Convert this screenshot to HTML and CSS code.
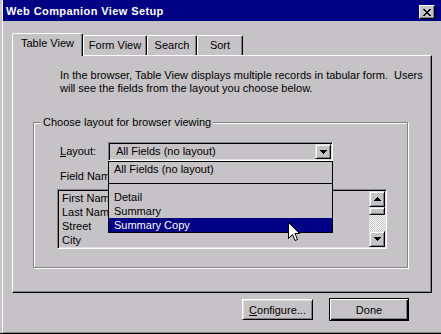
FILE: index.html
```html
<!DOCTYPE html>
<html lang="en">
<head>
    <meta charset="UTF-8">
    <title>Web Companion View Setup</title>
    <link rel="stylesheet" href="styles.css">
</head>
<body>

    <div class="window">
        <div class="frame">
            <div class="titlebar">
                <span class="title">Web Companion View Setup</span>
                <span class="close-btn">
                    <svg width="8" height="7" viewBox="0 0 8 7" shape-rendering="crispEdges">
                        <path d="M0 0h2v1H0z M6 0h2v1H6z M1 1h2v1H1z M5 1h2v1H5z M2 2h4v1H2z M3 3h2v1H3z M2 4h4v1H2z M1 5h2v1H1z M5 5h2v1H5z M0 6h2v1H0z M6 6h2v1H6z" fill="#000"/>
                    </svg>
                </span>
            </div>

            <div class="tabs">
                <div class="tab active tab-table">Table View</div>
                <div class="tab tab-form">Form View</div>
                <div class="tab tab-search">Search</div>
                <div class="tab tab-sort">Sort</div>
            </div>

            <div class="panel">
                <p class="intro">In the browser, Table View displays multiple records in tabular form.&nbsp; Users<br>will see the fields from the layout you choose below.</p>

                <fieldset class="group">
                    <legend>Choose layout for browser viewing</legend>

                    <div class="layout-row">
                        <label class="field-label"><u>L</u>ayout:</label>
                        <div class="combo">
                            <span class="combo-value">All Fields (no layout)</span>
                            <span class="combo-btn">
                                <svg width="7" height="4" viewBox="0 0 7 4" shape-rendering="crispEdges">
                                    <path d="M0 0h7v1H0z M1 1h5v1H1z M2 2h3v1H2z M3 3h1v1H3z" fill="#000"/>
                                </svg>
                            </span>
                            <ul class="droplist">
                                <li>All Fields (no layout)</li>
                                <li class="sep"></li>
                                <li>Detail</li>
                                <li>Summary</li>
                                <li class="selected">Summary Copy</li>
                            </ul>
                        </div>
                    </div>

                    <div class="field-label names-label">Field Names:</div>

                    <div class="listbox">
                        <ul class="items">
                            <li>First Name</li>
                            <li>Last Name</li>
                            <li>Street</li>
                            <li>City</li>
                        </ul>
                        <div class="scrollbar">
                            <span class="sb-btn">
                                <svg width="7" height="4" viewBox="0 0 7 4" shape-rendering="crispEdges">
                                    <path d="M3 0h1v1H3z M2 1h3v1H2z M1 2h5v1H1z M0 3h7v1H0z" fill="#000"/>
                                </svg>
                            </span>
                            <span class="sb-thumb"></span>
                            <span class="sb-track"></span>
                            <span class="sb-btn">
                                <svg width="7" height="4" viewBox="0 0 7 4" shape-rendering="crispEdges">
                                    <path d="M0 0h7v1H0z M1 1h5v1H1z M2 2h3v1H2z M3 3h1v1H3z" fill="#000"/>
                                </svg>
                            </span>
                        </div>
                    </div>
                </fieldset>
            </div>

            <div class="buttons">
                <button type="button" class="btn btn-configure"><u>C</u>onfigure...</button>
                <button type="button" class="btn btn-done">Done</button>
            </div>
        </div>

        <!-- mouse pointer over the open list -->
        <svg class="cursor" width="12" height="20" viewBox="0 0 12 20">
            <path d="M0.5 0.5V16.5L4.5 12.5L7 18.5L9.5 17.5L7 11.5H11.5Z" fill="#fff" stroke="#000" stroke-width="1"/>
        </svg>
    </div>

</body>
</html>
```

FILE: styles.css
```css
* {
    box-sizing: border-box;
}
body {
    margin: 0;
    background-color: #c6c3c6;
    font-family: "Liberation Sans", Arial, sans-serif;
    font-size: 11px;
    color: #000;
}
.window {
    position: relative;
    width: 441px;
    height: 334px;
    padding-left: 2px;
    background-color: #c6c3c6;
    border-bottom: 1px solid #000;
    overflow: hidden;
}
.frame {
    height: 333px;
    border-left: 1px solid #fff;
    border-bottom: 1px solid #848284;
}

/* title bar */
.titlebar {
    display: flex;
    justify-content: space-between;
    align-items: flex-start;
    height: 21px;
    padding: 5px 6px 0 3px;
    background-color: #000084;
    color: #fff;
}
.title {
    font-family: "Liberation Sans", Arial, sans-serif;
    font-size: 11px;
    font-weight: 700;
    line-height: 13px;
    letter-spacing: 0.4px;
}
.close-btn {
    display: flex;
    align-items: center;
    justify-content: center;
    width: 16px;
    height: 14px;
    background-color: #c6c3c6;
    border: 1px solid;
    border-color: #fff #000 #000 #fff;
    box-shadow: inset -1px -1px #848284;
}

/* tabs */
.tabs {
    position: relative;
    z-index: 2;
    display: flex;
    align-items: flex-end;
    height: 22px;
    margin: 12px 0 0 9px;
}
.tab {
    height: 20px;
    padding-top: 3px;
    line-height: 13px;
    text-align: center;
    background-color: #c6c3c6;
    border: 1px solid;
    border-bottom: none;
    border-color: #fff #000 transparent #fff;
    border-radius: 2px 2px 0 0;
    box-shadow: inset -1px 0 #848284;
}
.tab.active {
    height: 23px;
    margin-bottom: -1px;
}
.tab-table { width: 71px; }
.tab-form { width: 64px; }
.tab-search { width: 50px; }
.tab-sort { width: 46px; }

.panel {
    position: relative;
    z-index: 1;
    width: 420px;
    height: 238px;
    margin-left: 9px;
    padding-top: 13px;
    border: 1px solid;
    border-color: #fff #000 #000 #fff;
    box-shadow: inset -1px -1px #848284;
}
.intro {
    margin: 0 0 21px 47px;
    line-height: 13px;
}

/* group box */
.group {
    width: 375px;
    margin: 0 0 0 20px;
    padding: 0 0 18px 0;
    border: 1px solid #848284;
    box-shadow: 1px 1px #fff, inset 1px 1px #fff;
    min-inline-size: auto;
}
.group legend {
    margin-left: 7px;
    padding: 0 2px;
    line-height: 13px;
    background-color: #c6c3c6;
}
.field-label {
    line-height: 13px;
}
.layout-row {
    display: flex;
    align-items: center;
    height: 19px;
    margin: 13px 0 0 26px;
}
.layout-row .field-label {
    width: 48px;
}
.combo {
    position: relative;
    display: flex;
    align-items: center;
    justify-content: space-between;
    width: 225px;
    height: 19px;
    padding: 1px;
    border: 1px solid;
    border-color: #848284 #fff #fff #848284;
    box-shadow: inset 1px 1px #000, inset -1px -1px #dfdfdf;
}
.combo-value {
    padding-left: 6px;
    line-height: 15px;
}
.combo-btn,
.sb-btn,
.sb-thumb {
    display: flex;
    align-items: center;
    justify-content: center;
    background-color: #c6c3c6;
    border: 1px solid;
    border-color: #dfdfdf #000 #000 #dfdfdf;
    box-shadow: inset 1px 1px #fff, inset -1px -1px #848284;
}
.combo-btn {
    width: 16px;
    height: 15px;
}
.droplist {
    position: absolute;
    top: 18px;
    left: -1px;
    z-index: 5;
    width: 225px;
    margin: 0;
    padding: 0;
    list-style: none;
    background-color: #c6c3c6;
    border: 1px solid #000;
}
.droplist li {
    height: 14px;
    padding-left: 5px;
    line-height: 14px;
    white-space: nowrap;
}
.droplist .sep {
    position: relative;
}
.droplist .sep::after {
    content: "";
    position: absolute;
    left: 0;
    right: 0;
    top: 7px;
    height: 1px;
    background-color: #000;
}
.droplist .selected {
    background-color: #000084;
    color: #fff;
}
.names-label {
    margin: 9px 0 0 26px;
}

/* field list */
.listbox {
    display: flex;
    width: 330px;
    height: 60px;
    margin: 6px 0 0 23px;
    padding: 1px;
    border: 1px solid;
    border-color: #848284 #fff #fff #848284;
    box-shadow: inset 1px 1px #000, inset -1px -1px #dfdfdf;
}
.items {
    flex: 1;
    margin: 0;
    padding: 0;
    list-style: none;
}
.items li {
    height: 14px;
    padding-left: 3px;
    line-height: 14px;
}
.scrollbar {
    display: flex;
    flex-direction: column;
    width: 16px;
}
.sb-btn {
    height: 16px;
}
.sb-thumb {
    height: 8px;
}
.sb-track {
    flex: 1;
    background: repeating-conic-gradient(#fff 0% 25%, #c6c3c6 0% 50%) 0 0 / 2px 2px;
}

/* bottom buttons */
.buttons {
    display: flex;
    justify-content: flex-end;
    align-items: center;
    gap: 16px;
    height: 23px;
    margin: 5px 32px 0 0;
}
.btn {
    padding: 0;
    font-family: inherit;
    font-size: 11px;
    color: #000;
    background-color: #c6c3c6;
}
.btn-configure {
    width: 71px;
    height: 21px;
    border: 1px solid;
    border-color: #fff #000 #000 #fff;
    box-shadow: inset 1px 1px #dfdfdf, inset -1px -1px #848284;
}
.btn-done {
    width: 80px;
    height: 23px;
    border: 1px solid #000;
    box-shadow: inset 1px 1px #fff, inset -1px -1px #000, inset -2px -2px #848284;
}

.cursor {
    position: absolute;
    left: 288px;
    top: 222px;
    z-index: 10;
}
```
